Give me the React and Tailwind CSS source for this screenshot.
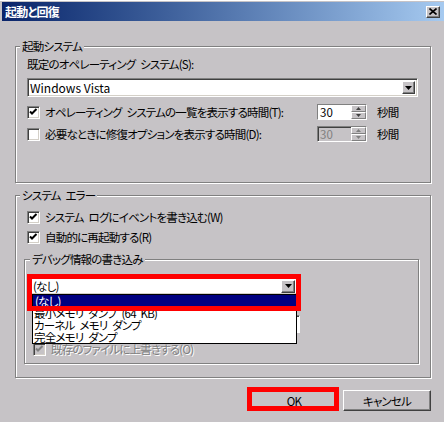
import React from 'react';

// Win2000 style "起動と回復" dialog with an open dump-type dropdown

function Check({ checked, disabled }) {
  return (
    <span
      className={`relative box-border w-[13px] h-[13px] shrink-0 border border-t-[#808080] border-l-[#808080] border-b-white border-r-white shadow-[inset_1px_1px_0_#404040,inset_-1px_-1px_0_#d4d0c8] ${disabled ? 'bg-[#c6c3c6]' : 'bg-white'}`}
    >
      {checked && (
        <svg width="11" height="11" viewBox="0 0 11 11" className="absolute left-0 top-0">
          <polyline
            points="2,4.5 4,6.5 8.5,2"
            fill="none"
            stroke={disabled ? '#808080' : '#000'}
            strokeWidth="2"
          />
        </svg>
      )}
    </span>
  );
}

function DropBtn({ className = '' }) {
  return (
    <div
      className={`flex items-center justify-center bg-[#c6c3c6] border border-t-white border-l-white border-r-[#404040] border-b-[#404040] shadow-[inset_-1px_-1px_0_#808080] ${className}`}
    >
      <svg width="7" height="4" viewBox="0 0 7 4">
        <polygon points="0,0 7,0 3.5,4" fill="#000" />
      </svg>
    </div>
  );
}

function Combo({ text, className = '', btnClass = '', textClass = '' }) {
  return (
    <div
      className={`flex items-center bg-white border border-t-[#808080] border-l-[#808080] border-b-white border-r-white shadow-[inset_1px_1px_0_#404040,inset_-1px_-1px_0_#d4d0c8] ${className}`}
    >
      <span className={`flex-1 pl-[2px] leading-[14px] whitespace-nowrap ${textClass}`}>{text}</span>
      <DropBtn className={btnClass} />
    </div>
  );
}

function Spin({ disabled }) {
  return (
    <div className="flex w-[50px] h-[16px] shrink-0 border border-t-[#808080] border-l-[#808080] border-b-white border-r-white shadow-[inset_1px_1px_0_#404040]">
      <div className={`flex-1 pl-[2px] leading-[14px] tracking-normal ${disabled ? 'text-[#808080]' : 'bg-white'}`}>30</div>
      <div className="flex flex-col w-[15px]">
        {[0, 1].map((i) => (
          <div
            key={i}
            className="flex-1 flex items-center justify-center bg-[#c6c3c6] border border-t-white border-l-white border-r-[#808080] border-b-[#808080]"
          >
            <svg width="5" height="3" viewBox="0 0 5 3">
              <polygon points={i === 0 ? '0,3 5,3 2.5,0' : '0,0 5,0 2.5,3'} fill={disabled ? '#808080' : '#404040'} />
            </svg>
          </div>
        ))}
      </div>
    </div>
  );
}

function Button({ children }) {
  return (
    <div className="w-[88px] h-[21px] flex items-center justify-center bg-[#c6c3c6] border border-t-white border-l-white border-r-[#404040] border-b-[#404040] shadow-[inset_-1px_-1px_0_#808080] leading-[14px]">
      {children}
    </div>
  );
}

export default function App() {
  const group =
    'border border-[#808080] shadow-[1px_1px_0_#fff,inset_1px_1px_0_#fff]';

  return (
    <div className="w-[444px] h-[422px] overflow-hidden bg-[#c6c3c6] text-[11.5px] tracking-[-0.8px] [word-spacing:3px] text-black font-['Noto_Sans_CJK_JP',sans-serif] [font-feature-settings:'palt'] border-t border-t-white pt-px">
      {/* Title bar */}
      <div className="ml-[2px] h-[19px] flex items-center justify-between bg-linear-to-r from-[#0a246a] to-[#a6caf0] pl-[3px] pr-[4px]">
        <span className="text-white text-[12px] font-bold leading-[19px]">起動と回復</span>
        <div className="w-[14px] h-[12px] flex items-center justify-center bg-[#c6c3c6] border border-t-white border-l-white border-r-[#404040] border-b-[#404040] shadow-[inset_-1px_-1px_0_#808080]">
          <svg width="8" height="7" viewBox="0 0 8 7">
            <path d="M0.5 0.5 L7.5 6.5 M7.5 0.5 L0.5 6.5" stroke="#000" strokeWidth="1.6" />
          </svg>
        </div>
      </div>

      <div className="pl-[15px] pr-[13px]">
        {/* 起動システム */}
        <fieldset className={`${group} mt-[18px] pl-[11px] pr-[12px] pt-[4px] pb-[40px]`}>
          <legend className="ml-[-7px] px-[2px] leading-[14px] bg-[#c6c3c6]">起動システム</legend>
          <div className="leading-[14px] h-[14px]">既定のオペレーティング システム(S):</div>
          <Combo
            text="Windows Vista"
            className="mt-[7px] h-[19px]"
            textClass="tracking-normal [word-spacing:0px] text-[12px]"
            btnClass="w-[13px] h-[13px] mr-[2px]"
          />
          <div className="flex items-center h-[16px] mt-[7px]">
            <Check checked />
            <span className="ml-[5px] flex-1 leading-[14px] whitespace-nowrap">オペレーティング システムの一覧を表示する時間(T):</span>
            <Spin />
            <span className="ml-[10px] w-[41px] leading-[14px]">秒間</span>
          </div>
          <div className="flex items-center h-[16px] mt-[6px]">
            <Check />
            <span className="ml-[5px] flex-1 leading-[14px] whitespace-nowrap">必要なときに修復オプションを表示する時間(D):</span>
            <Spin disabled />
            <span className="ml-[10px] w-[41px] leading-[14px]">秒間</span>
          </div>
        </fieldset>

        {/* システム エラー */}
        <fieldset className={`${group} mt-[5px] pl-[8px] pr-[11px] pb-[13px]`}>
          <legend className="ml-[-4px] px-[2px] leading-[14px] bg-[#c6c3c6]">システム エラー</legend>
          <div className="flex items-center gap-[5px] h-[14px] mt-[8px] ml-[3px]">
            <Check checked />
            <span className="leading-[14px]">システム ログにイベントを書き込む(W)</span>
          </div>
          <div className="flex items-center gap-[5px] h-[14px] mt-[6px] ml-[3px]">
            <Check checked />
            <span className="leading-[14px]">自動的に再起動する(R)</span>
          </div>

          <fieldset className={`${group} mt-[8px] pl-[5px] pt-[11px] pb-[7px]`}>
            <legend className="px-[2px] leading-[14px] bg-[#c6c3c6]">デバッグ情報の書き込み</legend>
            <div className="relative w-[268px]">
              <Combo text="(なし)" className="h-[18px]" btnClass="w-[14px] h-[13px] mr-[2px]" />
              {/* open list */}
              <div className="absolute left-[2px] top-[17px] z-10 w-[265px] border border-black bg-white">
                <div className="h-[12px] leading-[12px] pl-[2px] bg-[#000080] text-white">(なし)</div>
                <div className="h-[12px] leading-[12px] pl-[1px]">最小メモリ ダンプ (64 KB)</div>
                <div className="h-[12px] leading-[12px] pl-[1px]">カーネル メモリ ダンプ</div>
                <div className="h-[12px] leading-[12px] pl-[1px]">完全メモリ ダンプ</div>
              </div>
              {/* highlight frame */}
              <div className="absolute left-[-3px] top-[-3px] z-20 w-[274px] h-[37px] border-[5px] border-[#ff0000]" />
            </div>
            {/* dump file field, hidden under the open list */}
            <div className="mt-[20px] ml-[2px] w-[268px] h-[18px] bg-white border border-t-[#808080] border-l-[#808080] border-b-white border-r-white shadow-[inset_1px_1px_0_#404040]" />
            <div className="flex items-center gap-[5px] h-[14px] mt-[9px] ml-[3px]">
              <Check checked disabled />
              <span className="leading-[14px] text-[#808080] [text-shadow:1px_1px_0_#fff]">既存のファイルに上書きする(O)</span>
            </div>
          </fieldset>
        </fieldset>

        {/* buttons */}
        <div className="flex justify-end gap-[5px] mt-[12px]">
          <div className="relative">
            <Button>OK</Button>
            <div className="absolute left-[-3px] top-[-3px] w-[92px] h-[24px] border-[5px] border-[#ff0000]" />
          </div>
          <Button>キャンセル</Button>
        </div>
      </div>
    </div>
  );
}
